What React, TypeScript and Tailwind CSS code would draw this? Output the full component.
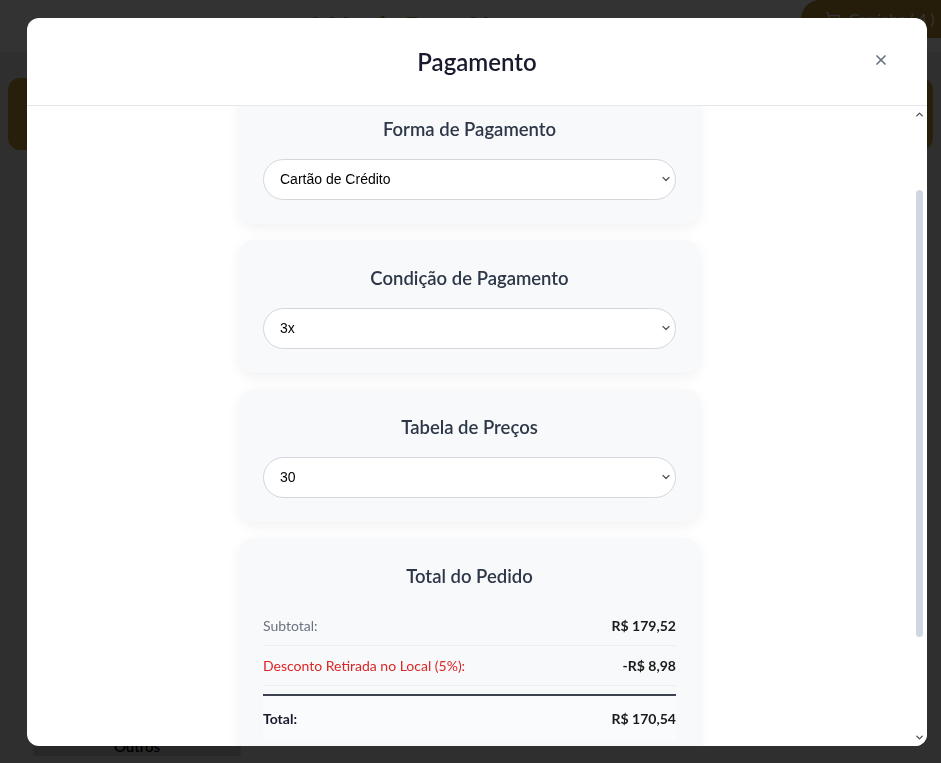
import { useLayoutEffect, useRef, FC } from 'react';
import { X, ShoppingCart, ChevronDown, ChevronUp } from 'lucide-react';

type PickerCardProps = { title: string; value: string; options: string[] };

const PickerCard: FC<PickerCardProps> = ({ title, value, options }) => (
  <section className="rounded-2xl bg-[#f8f9fa] p-6 shadow-[0_4px_14px_rgba(0,0,0,0.06)]">
    <h3 className="mb-4 text-center text-[18.5px] font-semibold leading-7 text-[#2d3748]">{title}</h3>
    <div className="relative">
      <select
        defaultValue={value}
        className="h-[41px] w-full appearance-none rounded-full border border-[#d4d6dc] bg-white px-4 text-[14px] text-black [font-family:'Liberation_Sans',Arial,sans-serif]"
      >
        {options.map((o) => (
          <option key={o} value={o}>
            {o}
          </option>
        ))}
      </select>
      <ChevronDown
        size={12}
        strokeWidth={2.6}
        className="pointer-events-none absolute right-[4px] top-[14px] text-[#5a5a5a]"
      />
    </div>
  </section>
);

// the page is screenshotted with scrollbars hidden, so the bar is drawn as its own column
const ScrollRail: FC = () => (
  <div className="flex w-[15px] shrink-0 flex-col items-center bg-white">
    <ChevronUp size={11} strokeWidth={3} className="mt-[3px] text-[#505050]" />
    <div className="mt-[70px] h-[447px] w-[7px] rounded-full bg-[#cfd8e2]" />
    <div className="flex-1" />
    <ChevronDown size={11} strokeWidth={3} className="mb-[3px] text-[#505050]" />
  </div>
);

const PaymentModal: FC = () => {
  const bodyRef = useRef<HTMLDivElement>(null);

  useLayoutEffect(() => {
    if (bodyRef.current) bodyRef.current.scrollTop = 95;
  }, []);

  return (
    <div className="fixed inset-0 flex items-start bg-black/80 pl-[27px] pt-[18px]">
      <div className="flex h-[728px] w-[900px] flex-col overflow-hidden rounded-xl bg-white">
        <header className="relative flex h-[88px] shrink-0 items-center justify-center border-b border-[#e5e7eb]">
          <h2 className="text-[24px] font-semibold text-[#1a1a2e]">Pagamento</h2>
          <button className="absolute right-[38px] top-[34px] text-[#6b7280]">
            <X size={16} strokeWidth={2.6} />
          </button>
        </header>

        <div className="flex min-h-0 flex-1">
          <div ref={bodyRef} className="flex-1 overflow-y-auto">
            <div className="mx-auto flex w-[461px] flex-col gap-4 pt-20 pb-9">
              <PickerCard
                title="Forma de Pagamento"
                value="Cartão de Crédito"
                options={['Dinheiro', 'Pix', 'Cartão de Débito', 'Cartão de Crédito']}
              />
              <PickerCard title="Condição de Pagamento" value="3x" options={['1x', '2x', '3x', '4x']} />
              <PickerCard title="Tabela de Preços" value="30" options={['0', '30', '60']} />

              <section className="rounded-2xl bg-[#f8f9fa] p-6 shadow-[0_4px_14px_rgba(0,0,0,0.06)]">
                <h3 className="mb-4 text-center text-[18.5px] font-semibold leading-7 text-[#2d3748]">
                  Total do Pedido
                </h3>
                <div className="text-[14px]">
                  <div className="flex h-10 items-center justify-between border-b border-[#eceef1]">
                    <span className="text-[#6b7280]">Subtotal:</span>
                    <span className="font-bold text-[#1a1a1a]">R$ 179,52</span>
                  </div>
                  <div className="flex h-10 items-center justify-between border-b border-[#eceef1]">
                    <span className="text-[#dc2626]">Desconto Retirada no Local (5%):</span>
                    <span className="font-bold text-[#1a1a1a]">-R$ 8,98</span>
                  </div>
                  <div className="mt-2 flex h-[46px] items-center justify-between border-t-2 border-[#3d4250] bg-[#fafbfc]">
                    <span className="font-bold text-[#1a1a2e]">Total:</span>
                    <span className="font-bold text-[#1a1a1a]">R$ 170,54</span>
                  </div>
                </div>
              </section>

              <button className="mt-2 h-14 rounded-full bg-[#b8860b] text-[16px] font-semibold text-white">
                Confirmar Pedido
              </button>
            </div>
          </div>
          <ScrollRail />
        </div>
      </div>
    </div>
  );
};

export default function App() {
  return (
    <div className="relative h-[763px] overflow-hidden bg-[#ececec] font-['Lato','Noto_Sans',sans-serif]">
      <header className="flex h-[52px] items-center bg-white">
        <div className="flex-1 text-center">
          <h1 className="text-[27px] font-bold text-[#b08a3a]">Móveis Bonafé</h1>
        </div>
        <button className="mr-[-20px] flex h-[38px] w-[160px] items-center gap-2 self-start rounded-full bg-[#b8902e] px-6 text-[15px] text-white">
          <ShoppingCart size={16} />
          Carrinho ( 4 )
        </button>
      </header>

      <div className="mx-2 mt-[26px] h-[72px] rounded-xl bg-[#c8983c]" />

      <div className="flex px-[33px] pt-4">
        <aside className="flex h-[590px] w-[208px] flex-col justify-end border-x border-[#d0d0d0] bg-[#c8c8c8]">
          <p className="text-center text-[15px] leading-5 font-semibold text-black">Outros</p>
        </aside>
      </div>

      <PaymentModal />
    </div>
  );
}
